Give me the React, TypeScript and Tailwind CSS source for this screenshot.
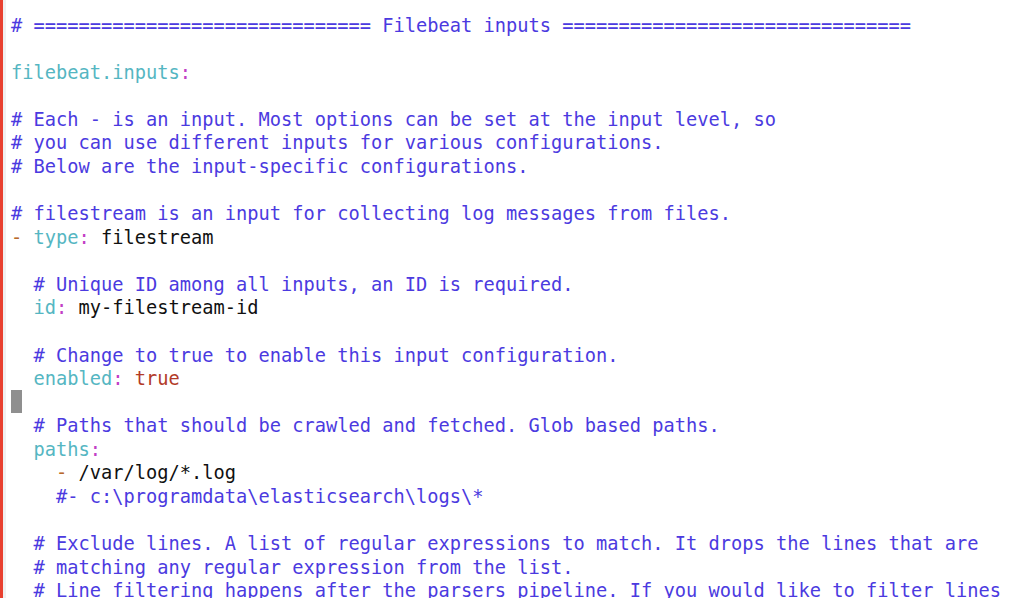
import React from "react";

const C = "text-[#4b3ae0]"; // comment
const K = "text-[#55b6c2]"; // key
const P = "text-[#c23fc6]"; // colon
const D = "text-[#b8692a]"; // dash
const V = "text-[#111111]"; // value
const R = "text-[#b23a28]"; // true

type Seg = [string, string];
const lines: Seg[][] = [
  [[C, "# ============================== Filebeat inputs ==============================="]],
  [],
  [[K, "filebeat.inputs"], [P, ":"]],
  [],
  [[C, "# Each - is an input. Most options can be set at the input level, so"]],
  [[C, "# you can use different inputs for various configurations."]],
  [[C, "# Below are the input-specific configurations."]],
  [],
  [[C, "# filestream is an input for collecting log messages from files."]],
  [[D, "- "], [K, "type"], [P, ":"], [V, " filestream"]],
  [],
  [[C, "  # Unique ID among all inputs, an ID is required."]],
  [[V, "  "], [K, "id"], [P, ":"], [V, " my-filestream-id"]],
  [],
  [[C, "  # Change to true to enable this input configuration."]],
  [[V, "  "], [K, "enabled"], [P, ":"], [V, " "], [R, "true"]],
  [["CURSOR", ""]],
  [[C, "  # Paths that should be crawled and fetched. Glob based paths."]],
  [[V, "  "], [K, "paths"], [P, ":"]],
  [[V, "    "], [D, "- "], [V, "/var/log/*.log"]],
  [[C, "    #- c:\\programdata\\elasticsearch\\logs\\*"]],
  [],
  [[C, "  # Exclude lines. A list of regular expressions to match. It drops the lines that are"]],
  [[C, "  # matching any regular expression from the list."]],
  [[C, "  # Line filtering happens after the parsers pipeline. If you would like to filter lines"]],
];

export default function App() {
  return (
    <div className="w-[1024px] h-[598px] overflow-hidden bg-white flex">
      <div className="w-[3px] shrink-0 bg-[#e8402f]" />
      <div className="w-[3px] shrink-0 bg-[#f0f0f0]" />
      <div
        className="flex-1 pt-[13.5px] pl-[5px] text-[18.7px] leading-[23.58px] whitespace-pre"
        style={{ fontFamily: '"DejaVu Sans Mono", "Liberation Mono", monospace' }}
      >
        {lines.map((segs, i) => (
          <div key={i} className="h-[23.58px]">
            {segs.length === 0 ? " " : segs.map(([cls, t], j) =>
              cls === "CURSOR" ? (
                <span key={j} className="inline-block w-[11px] h-[23px] bg-[#8f8f8f] align-top -mt-[1px]" />
              ) : (
                <span key={j} className={cls}>{t}</span>
              )
            )}
          </div>
        ))}
      </div>
    </div>
  );
}
